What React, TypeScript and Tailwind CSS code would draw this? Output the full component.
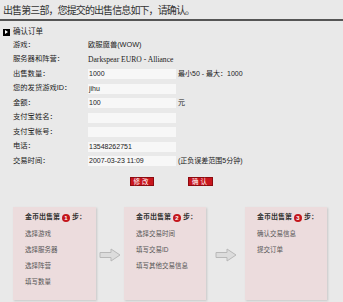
const rows: { label: string; kind: "text" | "serif" | "input"; value?: string; hint?: string }[] = [
  { label: "游戏：", kind: "text", value: "欧服魔兽(WOW)" },
  { label: "服务器和阵营：", kind: "serif", value: "Darkspear EURO - Alliance" },
  { label: "出售数量：", kind: "input", value: "1000", hint: "最小50 - 最大：1000" },
  { label: "您的发货游戏ID：", kind: "input", value: "jihu" },
  { label: "金额：", kind: "input", value: "100", hint: "元" },
  { label: "支付宝姓名：", kind: "input", value: "" },
  { label: "支付宝帐号：", kind: "input", value: "" },
  { label: "电话：", kind: "input", value: "13548262751" },
  { label: "交易时间：", kind: "input", value: "2007-03-23 11:09", hint: "(正负误差范围5分钟)" },
];

const steps = [
  { n: "1", items: ["选择游戏", "选择服务器", "选择阵营", "填写数量"] },
  { n: "2", items: ["选择交易时间", "填写交易ID", "填写其他交易信息"] },
  { n: "3", items: ["确认交易信息", "提交订单"] },
];

const cjk = "font-['Liberation_Sans','Noto_Sans_CJK_SC',sans-serif]";

const Arrow = () => (
  <svg width="22" height="14" viewBox="0 0 22 14">
    <path d="M1 4.5 H12 V1 L21 7 L12 13 V9.5 H1 Z" fill="#dcdcdc" stroke="#b8b8b8" strokeWidth="1" />
  </svg>
);

const StepBox = ({ n, items, w }: { n: string; items: string[]; w: string }) => (
  <div className={`${w} h-[93px] shrink-0 bg-[#ecdcdd] shadow-[1px_1px_2px_rgba(0,0,0,0.15)] pl-[12px] pt-[6px]`}>
    <div className="flex items-center h-[10px] text-[7px] font-bold text-[#333]">
      <span>金币出售第</span>
      <span className="mx-[2px] w-[8px] h-[8px] rounded-full bg-[#c4161c] text-white text-[6px] leading-[8px] text-center font-bold">{n}</span>
      <span>步：</span>
    </div>
    <div className="mt-[6px] flex flex-col gap-[6px] text-[6.5px] text-[#555]">
      {items.map((it) => (
        <div key={it} className="h-[10px] leading-[10px]">{it}</div>
      ))}
    </div>
  </div>
);

export default function App() {
  return (
    <div className={`w-[343px] h-[302px] overflow-hidden bg-[#e9e9e9] text-[#222] ${cjk}`}>
      {/* page title */}
      <div className="h-[21px] border-b-2 border-[#555] pl-[3px] pt-[5px] text-[10px] leading-[12px] tracking-[-0.9px] text-[#333]">
        出售第三部，您提交的出售信息如下，请确认。
      </div>

      {/* section title */}
      <div className="mt-[7px] flex items-center h-[8px] pl-[3px] text-[7.5px] text-[#222]">
        <span className="w-[7px] h-[7px] bg-black flex items-center justify-center mr-[3px]">
          <span className="w-0 h-0 border-y-[2px] border-y-transparent border-l-[3px] border-l-white" />
        </span>
        确认订单
      </div>

      {/* form rows */}
      <div className="mt-[2px] flex flex-col">
        {rows.map((r) => (
          <div key={r.label} className="flex items-center h-[14.5px] text-[7.3px]">
            <div className="w-[88px] pl-[13px] shrink-0">{r.label}</div>
            {r.kind === "text" && <div>{r.value}</div>}
            {r.kind === "serif" && <div className="font-['Liberation_Serif',serif] text-[7.6px]">{r.value}</div>}
            {r.kind === "input" && (
              <div className="w-[88px] h-[10px] bg-[#f7f7f7] pl-[1px] leading-[10px] text-[7px] text-[#222] shrink-0">{r.value}</div>
            )}
            {r.hint && <div className="ml-[2px] text-[7px]">{r.hint}</div>}
          </div>
        ))}
      </div>

      {/* buttons */}
      <div className="mt-[8px] flex h-[9px]">
        <div className="ml-[130px] w-[24px] h-[9px] bg-[#c8161d] border border-[#8c0a0f] text-white text-[6.5px] leading-[7px] text-center tracking-[2px]">修改</div>
        <div className="ml-[34px] w-[25px] h-[9px] bg-[#c8161d] border border-[#8c0a0f] text-white text-[6.5px] leading-[7px] text-center tracking-[2px]">确认</div>
      </div>

      {/* steps */}
      <div className="mt-[21px] flex pl-[13px]">
        <StepBox n={steps[0].n} items={steps[0].items} w="w-[83px]" />
        <div className="w-[28px] flex items-center justify-center pt-[3px]"><Arrow /></div>
        <StepBox n={steps[1].n} items={steps[1].items} w="w-[82px]" />
        <div className="w-[39px] flex items-center justify-center pt-[3px]"><Arrow /></div>
        <StepBox n={steps[2].n} items={steps[2].items} w="w-[82px]" />
      </div>
    </div>
  );
}
